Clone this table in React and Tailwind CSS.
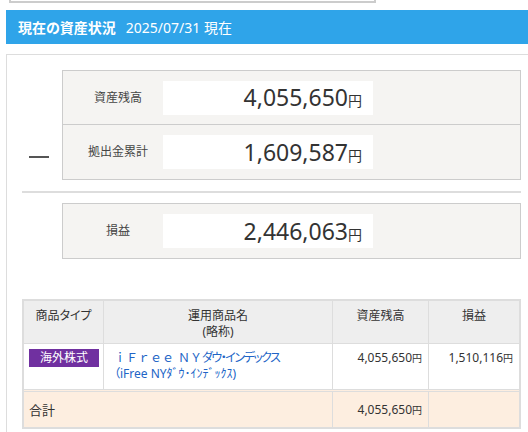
import React from 'react';

function Amount({ value, big }) {
  return big ? (
    <span className="flex items-baseline">
      <span className="text-[23px] leading-none text-[#333]">{value}</span>
      <span className="text-[14px] leading-none text-[#333]">円</span>
    </span>
  ) : (
    <span className="whitespace-nowrap">
      <span className="text-[12px]">{value}</span>
      <span className="text-[10px]">円</span>
    </span>
  );
}

function SummaryRow({ label, value, last }) {
  return (
    <div className={'h-[54px] flex items-center ' + (last ? '' : 'border-b border-[#ccc]')}>
      <div className="w-[100px] pl-[10px] text-center text-[12px] text-[#444]">{label}</div>
      <div className="w-[210px] h-[34px] bg-white flex items-center justify-end pr-[11px]">
        <Amount value={value} big />
      </div>
    </div>
  );
}

export default function App() {
  return (
    <div className="w-[528px] h-[432px] overflow-hidden bg-white text-[#333] font-['Noto_Sans','Noto_Sans_CJK_JP',sans-serif] [font-feature-settings:'palt']">
      {/* previous panel bottom */}
      <div className="ml-[9px] w-[367px] h-[3px] border-x-2 border-b-2 border-[#ccc]" />

      {/* heading */}
      <div className="mt-[7px] ml-[6px] h-[34px] bg-[#2fa4e9] flex items-center pl-[12px] text-white text-[14px]">
        <span className="font-bold">現在の資産状況</span>
        <span className="ml-[10px]">2025/07/31 現在</span>
      </div>

      <div className="mt-[10px] ml-[6px] border-l border-t border-[#ddd] pt-[15px] pl-[15px] pr-[7px] pb-[20px]">
        {/* balance and contributions */}
        <div className="flex">
          <div className="w-[40px] flex items-end pb-[22px] pl-[7px]">
            <div className="w-[20px] h-[2px] bg-[#555]" />
          </div>
          <div className="flex-1 border border-[#ccc] bg-[#f5f4f2]">
            <SummaryRow label="資産残高" value="4,055,650" />
            <SummaryRow label="拠出金累計" value="1,609,587" last />
          </div>
        </div>

        <div className="mt-[11px] h-[2px] bg-[#ddd]" />

        {/* profit */}
        <div className="mt-[10px] ml-[40px] border border-[#ccc] bg-[#f5f4f2]">
          <SummaryRow label="損益" value="2,446,063" last />
        </div>

        {/* product table */}
        <div className="mt-[40px] w-[499px] border-2 border-[#ddd] text-[12px] leading-[16px]">
          <div className="flex h-[42px] bg-[#eee] text-center">
            <div className="w-[80px] pt-[7px] border-r border-[#ddd]">商品タイプ</div>
            <div className="w-[229px] pt-[7px] border-r border-[#ddd]">運用商品名<br />(略称)</div>
            <div className="w-[96px] pt-[7px] border-r border-[#ddd]">資産残高</div>
            <div className="flex-1 pt-[7px]">損益</div>
          </div>
          <div className="flex h-[46px] border-t border-[#ddd] bg-white">
            <div className="w-[80px] pt-[5px] pl-[5px] border-r border-[#ddd]">
              <div className="w-[70px] h-[18px] bg-[#7030a0] text-white text-[12px] leading-[18px] text-center">海外株式</div>
            </div>
            <div className="w-[229px] pt-[6px] pl-[10px] border-r border-[#ddd] text-[#2164c6]">
              <div className="whitespace-nowrap">
                <span className="[font-feature-settings:normal]">ｉＦｒｅｅ</span>
                <span className="ml-[4px] [font-feature-settings:normal]">ＮＹ</span>
                <span className="tracking-[-1.5px]">ダウ・インデックス</span>
              </div>
              <div>（iFree NYﾀﾞｳ･ｲﾝﾃﾞｯｸｽ)</div>
            </div>
            <div className="w-[96px] pt-[6px] pr-[6px] text-right border-r border-[#ddd]">
              <Amount value="4,055,650" />
            </div>
            <div className="flex-1 pt-[6px] pr-[6px] text-right">
              <Amount value="1,510,116" />
            </div>
          </div>
          <div className="flex h-[38px] border-t-[3px] border-double border-[#ddd] bg-[#fdeee0] items-center">
            <div className="w-[309px] pl-[5px] text-[13px] border-r border-[#ddd] h-full flex items-center">合計</div>
            <div className="w-[96px] pr-[6px] text-right border-r border-[#ddd] h-full flex items-center justify-end">
              <Amount value="4,055,650" />
            </div>
            <div className="flex-1" />
          </div>
        </div>
      </div>
    </div>
  );
}
